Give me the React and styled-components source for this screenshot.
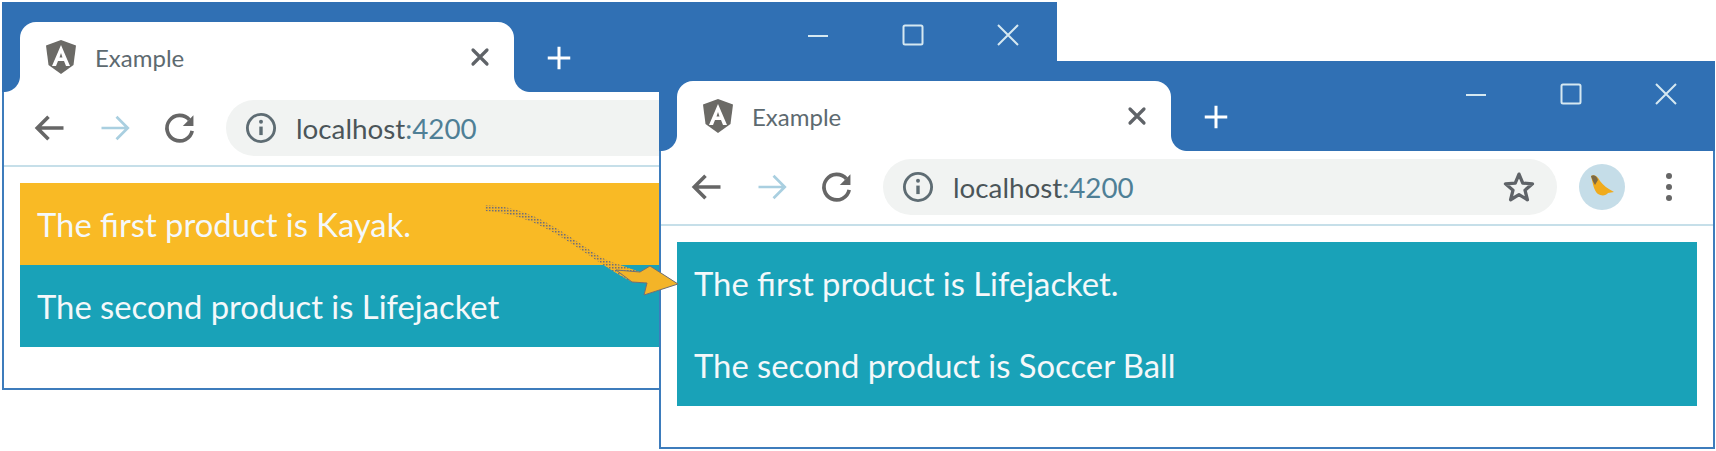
import React from 'react';
import styled, { createGlobalStyle } from 'styled-components';

const GlobalStyle = createGlobalStyle`
  html, body {
    margin: 0;
    background: #fff;
  }
  body {
    width: 1716px;
    height: 451px;
    overflow: hidden;
    font-family: Lato, 'Open Sans', 'Liberation Sans', sans-serif;
  }
`;

const Desktop = styled.div`
  position: relative;
  width: 1716px;
  height: 451px;
  background: #fff;
`;

const Window = styled.section`
  position: absolute;
  left: ${(p) => p.$left}px;
  top: ${(p) => p.$top}px;
  width: ${(p) => p.$width}px;
  height: 388px;
  box-sizing: border-box;
  display: flex;
  flex-direction: column;
  background: #fff;
  border: 2px solid #3d7cbc;
  border-top: 0;
  z-index: ${(p) => p.$z};
`;

const TitleBar = styled.header`
  height: 90px;
  flex: none;
  display: flex;
  align-items: flex-end;
  background: #3070b4;
  margin: 0 -2px;
  padding-left: 18px;
`;

const Tab = styled.div`
  position: relative;
  width: 494px;
  height: 70px;
  box-sizing: border-box;
  padding: 0 22px 0 25px;
  display: flex;
  align-items: center;
  background: #fff;
  border-radius: 16px 16px 0 0;
  color: #5f6b70;

  &::before,
  &::after {
    content: '';
    position: absolute;
    bottom: 0;
    width: 16px;
    height: 16px;
    background: #fff;
  }
  &::before {
    left: -16px;
    background: radial-gradient(circle at 0 0, #3070b4 15.5px, #fff 16.5px);
  }
  &::after {
    right: -16px;
    background: radial-gradient(circle at 100% 0, #3070b4 15.5px, #fff 16.5px);
  }
`;

const TabTitle = styled.span`
  flex: 1;
  margin-left: 18px;
  font-size: 24px;
  color: #5d6a70;
`;

const NewTab = styled.div`
  width: 36px;
  height: 36px;
  margin: 0 0 16px 27px;
  display: flex;
  align-items: center;
  justify-content: center;
`;

const Controls = styled.div`
  margin-left: auto;
  align-self: flex-start;
  display: flex;
  gap: 71px;
  margin-top: 21px;
  padding-right: 37px;
`;

const Toolbar = styled.nav`
  height: 75px;
  flex: none;
  box-sizing: border-box;
  padding: 8px 0 9px 0;
  display: flex;
  align-items: center;
  background: #fff;
  border-bottom: 2px solid #c6dfe9;
`;

const NavButton = styled.div`
  width: ${(p) => p.$w || 66}px;
  flex: none;
  display: flex;
  align-items: center;
  justify-content: center;
`;

const Omnibox = styled.div`
  flex: 1;
  height: 56px;
  box-sizing: border-box;
  padding: 0 20px 0 18px;
  display: flex;
  align-items: center;
  border-radius: 28px;
  background: #f1f3f2;
`;

const Address = styled.span`
  flex: 1;
  margin-left: 18px;
  font-size: 27.8px;
  color: #4b5559;

  em {
    font-style: normal;
    color: #4f7f96;
  }
`;

const Avatar = styled.div`
  width: 46px;
  height: 46px;
  flex: none;
  margin-left: 22px;
  border-radius: 50%;
  background: #c5dde8;
  display: flex;
  align-items: center;
  justify-content: center;
`;

const Menu = styled.div`
  flex: none;
  margin: 0 41px 0 41px;
  display: flex;
  flex-direction: column;
  gap: 5px;

  i {
    display: block;
    width: 6px;
    height: 6px;
    border-radius: 50%;
    background: #666;
  }
`;

const Content = styled.main`
  padding: 16px 16px 0 16px;
`;

const Row = styled.p`
  margin: 0;
  height: 82px;
  box-sizing: border-box;
  padding: 0 17px 0;
  display: flex;
  align-items: center;
  font-size: 32.8px;
  color: #f4f8fa;
  background: ${(p) => (p.$warning ? '#f9ba25' : '#19a2b8')};
`;

const ArrowOverlay = styled.svg`
  position: absolute;
  left: 0;
  top: 0;
  z-index: 3;
  pointer-events: none;
`;

const Icon = ({ size = 28, children, ...rest }) => (
  <svg width={size} height={size} viewBox="0 0 24 24" fill="none" {...rest}>
    {children}
  </svg>
);

const AngularLogo = () => (
  <svg width="32" height="34" viewBox="0 0 32 34">
    <path d="M16 0 L31 5.5 L28.5 25 L16 34 L3.500 25 L1 5.500 Z" fill="#6b6a66" />
    <path d="M16 5 L7 26 H11 L13 21 H19 L21 26 H25 Z M14.500 17.500 L16 13 L17.500 17.500 Z" fill="#fff" fillRule="evenodd" />
  </svg>
);

const CloseTab = () => (
  <Icon size={24}>
    <path d="M5 5 L19 19 M19 5 L5 19" stroke="#5f6368" strokeWidth="3.2" strokeLinecap="round" />
  </Icon>
);

const Plus = () => (
  <Icon size={30}>
    <path d="M12 3 V21 M3 12 H21" stroke="#fff" strokeWidth="2.4" />
  </Icon>
);

const Back = () => (
  <Icon size={36}>
    <path d="M21 12 H4 M11 4.500 L3.500 12 L11 19.500" stroke="#666" strokeWidth="2.4" />
  </Icon>
);

const Forward = () => (
  <Icon size={36}>
    <path d="M3 12 H20 M13 4.500 L20.500 12 L13 19.500" stroke="#a9cfe0" strokeWidth="1.8" />
  </Icon>
);

const Reload = () => (
  <Icon size={34}>
    <path d="M18.600 6.200 A9 9 0 1 0 20.600 14" stroke="#666" strokeWidth="2.600" />
    <path d="M21.500 3 V10.500 H14 Z" fill="#666" />
  </Icon>
);

const Info = () => (
  <Icon size={34}>
    <circle cx="12" cy="12" r="9.600" stroke="#5e6c73" strokeWidth="2" />
    <path d="M12 11 V17" stroke="#5e6c73" strokeWidth="2.400" />
    <circle cx="12" cy="7.600" r="1.400" fill="#5e6c73" />
  </Icon>
);

const Star = () => (
  <Icon size={36}>
    <path
      d="M12 3.400 L14.500 9.400 L21 9.900 L16 14.100 L17.600 20.500 L12 17.100 L6.400 20.500 L8 14.100 L3 9.900 L9.500 9.400 Z"
      stroke="#5f6368"
      strokeWidth="2.200"
      strokeLinejoin="round"
    />
  </Icon>
);

const Bird = () => (
  <svg width="28" height="26" viewBox="0 0 28 26">
    <path d="M3 2 C7 0 10 3 12 7 C15 11 20 15 26 18 L20 19 C18 22 13 22 10 20 C6 17 5 10 3 2 Z" fill="#f0ab1d" />
    <path d="M3 2 C7 0 9 3 10 6 L7 11 C5 8 4 5 3 2 Z" fill="#7d6a45" />
  </svg>
);

const Minimize = () => (
  <Icon size={24}>
    <path d="M2 13 H22" stroke="#d5e8f1" strokeWidth="2" />
  </Icon>
);

const Maximize = () => (
  <Icon size={24}>
    <rect x="2.500" y="2.500" width="19" height="19" rx="1.500" stroke="#d5e8f1" strokeWidth="2" />
  </Icon>
);

const CloseWindow = () => (
  <Icon size={24}>
    <path d="M2 2 L22 22 M22 2 L2 22" stroke="#d5e8f1" strokeWidth="2" />
  </Icon>
);

const Browser = ({ left, top, width, z, children }) => (
  <Window $left={left} $top={top} $width={width} $z={z}>
    <TitleBar>
      <Tab>
        <AngularLogo />
        <TabTitle>Example</TabTitle>
        <CloseTab />
      </Tab>
      <NewTab>
        <Plus />
      </NewTab>
      <Controls>
        <Minimize />
        <Maximize />
        <CloseWindow />
      </Controls>
    </TitleBar>
    <Toolbar>
      <NavButton $w={92}>
        <Back />
      </NavButton>
      <NavButton $w={38}>
        <Forward />
      </NavButton>
      <NavButton $w={92}>
        <Reload />
      </NavButton>
      <Omnibox>
        <Info />
        <Address>
          localhost<em>:4200</em>
        </Address>
        <Star />
      </Omnibox>
      <Avatar>
        <Bird />
      </Avatar>
      <Menu>
        <i />
        <i />
        <i />
      </Menu>
    </Toolbar>
    <Content>{children}</Content>
  </Window>
);

export default function App() {
  return (
    <Desktop>
      <GlobalStyle />
      <Browser left={2} top={2} width={1055} z={1}>
        <Row $warning>The first product is Kayak.</Row>
        <Row>The second product is Lifejacket</Row>
      </Browser>
      <Browser left={659} top={61} width={1056} z={2}>
        <Row>The first product is Lifejacket.</Row>
        <Row>The second product is Soccer Ball</Row>
      </Browser>
      <ArrowOverlay width="1716" height="451" viewBox="0 0 1716 451">
        <defs>
          <pattern id="dither" width="3" height="3" patternUnits="userSpaceOnUse">
            <rect width="3" height="3" fill="#f3b428" />
            <rect width="1.500" height="1.500" fill="#6f7077" />
          </pattern>
        </defs>
        <path
          d="M485 205 C520 206 545 220 575 240 C590 250 600 258 612 262 L640 272 L650 266 L678 284 L644 295 L647 283 L632 282 C620 276 605 266 590 256 C560 236 530 214 485 211 Z"
          fill="url(#dither)"
        />
        <path d="M640 272 L650 266 L678 284 L644 295 L647 283 L632 282 L616 270 Z" fill="#f3b428" stroke="#6f7077" strokeWidth="1" />
      </ArrowOverlay>
    </Desktop>
  );
}
